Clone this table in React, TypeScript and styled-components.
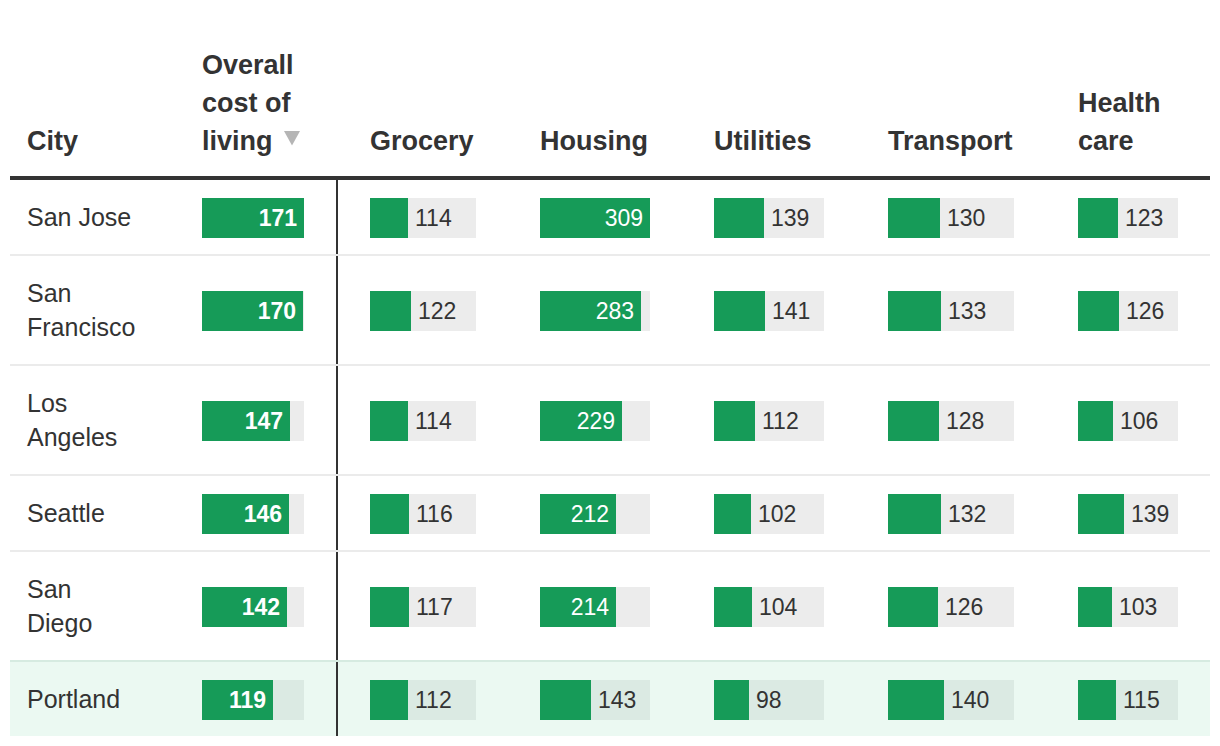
import React from "react";
import styled, { createGlobalStyle, css } from "styled-components";

const GlobalStyle = createGlobalStyle`
  html, body {
    margin: 0;
    padding: 0;
    background: #ffffff;
  }
  body {
    font-family: "Liberation Sans", Arial, sans-serif;
    color: #333333;
    overflow: hidden;
  }
`;

const GREEN = "#169b58";
const COLS = "160px 168px 170px 174px 174px 190px 164px";

const Page = styled.div`
  padding: 46px 10px 0 10px;
  width: 1200px;
`;

const Table = styled.div`
  display: flex;
  flex-direction: column;
  width: 1200px;
`;

const HeaderRow = styled.div`
  display: grid;
  grid-template-columns: ${COLS};
  align-items: end;
  border-bottom: 4px solid #333333;
`;

const HeadCell = styled.div<{ $first?: boolean }>`
  padding: 0 32px 16px ${(p) => (p.$first ? "17px" : "32px")};
  font-size: 27px;
  font-weight: 700;
  line-height: 38px;
  color: #333333;
`;

const SortMark = styled.svg`
  margin-left: 4px;
  vertical-align: 4px;
`;

const Row = styled.div<{ $highlight?: boolean; $first?: boolean }>`
  display: grid;
  grid-template-columns: ${COLS};
  background: ${(p) => (p.$highlight ? "#ebf9f2" : "#ffffff")};
  ${(p) =>
    !p.$first &&
    css`
      border-top: 2px solid ${p.$highlight ? "#d6ebe1" : "#ebebeb"};
    `}
`;

const CityCell = styled.div`
  display: flex;
  align-items: center;
  padding: 20px 33px 20px 17px;
  font-size: 25px;
  line-height: 34px;
  color: #333333;
`;

const BarCell = styled.div<{ $divider?: boolean }>`
  display: flex;
  align-items: center;
  padding: 18px 32px 16px 32px;
  ${(p) =>
    p.$divider &&
    css`
      border-right: 2px solid #333333;
    `}
`;

const Track = styled.div<{ $w: number; $highlight?: boolean }>`
  display: flex;
  align-items: center;
  width: ${(p) => p.$w}px;
  height: 40px;
  background: ${(p) => (p.$highlight ? "#dbeae3" : "#ececec")};
  font-size: 23px;
  line-height: 40px;
`;

const Fill = styled.div`
  display: flex;
  justify-content: flex-end;
  align-items: center;
  height: 40px;
  background: ${GREEN};
  flex: none;
  box-sizing: border-box;
  padding-right: 7px;
`;

const InLabel = styled.span<{ $bold?: boolean }>`
  color: #ffffff;
  font-weight: ${(p) => (p.$bold ? 700 : 400)};
  white-space: nowrap;
`;

const OutLabel = styled.span`
  color: #333333;
  margin-left: 7px;
  white-space: nowrap;
`;

type Col = { label: React.ReactNode; track: number; scale: number };

const columns: Col[] = [
  { label: "Overall cost of living", track: 102, scale: 102 / 171 },
  { label: "Grocery", track: 106, scale: 0.336 },
  { label: "Housing", track: 110, scale: 0.357 },
  { label: "Utilities", track: 110, scale: 0.362 },
  { label: "Transport", track: 126, scale: 0.4 },
  { label: "Health care", track: 100, scale: 0.328 },
];

const rows = [
  { city: "San Jose", v: [171, 114, 309, 139, 130, 123] },
  { city: "San Francisco", v: [170, 122, 283, 141, 133, 126] },
  { city: "Los Angeles", v: [147, 114, 229, 112, 128, 106] },
  { city: "Seattle", v: [146, 116, 212, 102, 132, 139] },
  { city: "San Diego", v: [142, 117, 214, 104, 126, 103] },
  { city: "Portland", v: [119, 112, 143, 98, 140, 115], highlight: true },
];

function Bar({
  value,
  col,
  bold,
  highlight,
}: {
  value: number;
  col: Col;
  bold?: boolean;
  highlight?: boolean;
}) {
  const w = Math.min(col.track, Math.round(value * col.scale));
  const inside = bold || w >= 60;
  return (
    <Track $w={col.track} $highlight={highlight}>
      <Fill style={{ width: w }}>
        {inside && <InLabel $bold={bold}>{value}</InLabel>}
      </Fill>
      {!inside && <OutLabel>{value}</OutLabel>}
    </Track>
  );
}

export default function App() {
  return (
    <>
      <GlobalStyle />
      <Page>
        <Table>
          <HeaderRow>
            <HeadCell $first>City</HeadCell>
            <HeadCell>
              Overall cost of living{" "}
              <SortMark width="16" height="15" viewBox="0 0 16 15">
                <polygon points="0,0 16,0 8,14.5" fill="#b5b5b5" />
              </SortMark>
            </HeadCell>
            {columns.slice(1).map((c, i) => (
              <HeadCell key={i}>{c.label}</HeadCell>
            ))}
          </HeaderRow>
          {rows.map((r, ri) => (
            <Row key={r.city} $first={ri === 0} $highlight={r.highlight}>
              <CityCell>{r.city}</CityCell>
              {r.v.map((val, ci) => (
                <BarCell key={ci} $divider={ci === 0}>
                  <Bar
                    value={val}
                    col={columns[ci]}
                    bold={ci === 0}
                    highlight={r.highlight}
                  />
                </BarCell>
              ))}
            </Row>
          ))}
        </Table>
      </Page>
    </>
  );
}
